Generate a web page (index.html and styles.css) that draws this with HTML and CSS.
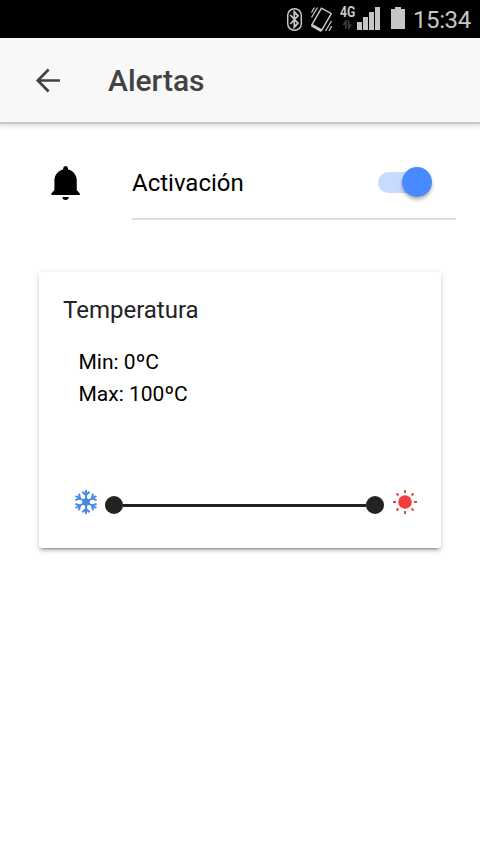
FILE: index.html
```html
<!DOCTYPE html>
<html lang="es">
<head>
<meta charset="utf-8">
<title>Alertas</title>
<link rel="stylesheet" href="styles.css">
</head>
<body>
<div class="status">
  <svg class="status-icons" width="130" height="38" viewBox="280 0 130 38" aria-hidden="true">
    <g fill="none" stroke="#c6c6c6">
      <rect x="287.7" y="8.7" width="13.6" height="21.6" rx="6.6" stroke-width="1.5"/>
      <path d="M290.300 15l7.700 8.200-3.700 4V11.800l3.700 4-7.700 8.200" stroke-width="1.800"/>
      <path d="M321.5 8.2l9.800 5.4-9.800 17-9.800-5.400z" stroke-width="1.500" stroke-linejoin="round"/>
      <path d="M311.8 25.2l9.500 5.400" stroke-width="3"/>
      <path d="M311.500 12.500l3-5M311.500 17.500l6-10M325.500 31l6-10M329 31l2.800-4.800" stroke-width="1.300"/>
    </g>
    <path d="M357 22h5v8h-5zM363 17h5v13h-5zM369 12h5v18h-5zM375 7h5v23h-5z" fill="#c6c6c6"/>
    <path d="M342.500 25l3-5h1.200v9h-1.800v-4zM352 24.500l-3 5h-1.200v-9h1.800v4z" fill="#3a3a3a"/>
    <path d="M391 9h4V7h6v2h4v20h-14z" fill="#c6c6c6"/>
  </svg>
  <span class="network">4G</span>
  <span class="clock">15:34</span>
</div>
<header class="toolbar">
  <svg class="back" width="26" height="26" viewBox="0 0 26 26" aria-hidden="true"><path d="M25 13.500H4M13.600 2.500L2.800 13.500l10.800 11" fill="none" stroke="#424242" stroke-width="2.700"/></svg>
  <h1 class="title">Alertas</h1>
</header>
<main class="content">
  <div class="item">
    <svg class="bell" width="30" height="36" viewBox="0 0 30 36" aria-hidden="true"><path transform="translate(.9 0) scale(.98 1)" d="M12.500 3.400a2.500 2.500 0 0 1 5 0v1.200c5.400 1.200 8.900 5.500 8.900 10.900v9.500l3.100 3.600v1.400H.5v-1.400L3.600 25v-9.500c0-5.400 3.500-9.700 8.900-10.900zM11.800 32h6.400a3.200 3 0 0 1-6.400 0z"/></svg>
    <div class="item-inner">
      <span class="label">Activación</span>
      <span class="toggle"><span class="knob"></span></span>
    </div>
  </div>
  <section class="card">
    <h2 class="card-title">Temperatura</h2>
    <p class="values">Min: 0ºC<br>Max: 100ºC</p>
    <div class="range">
      <svg class="snow" width="24" height="26" viewBox="-12 -13 24 26" aria-hidden="true">
        <defs><path id="arm" d="M0 0V-12M-3.600-10.200L0-6.800l3.600-3.400"/></defs>
        <circle r="3.800" fill="#4788e0"/>
        <g fill="none" stroke="#4788e0" stroke-width="2">
          <use href="#arm"/><use href="#arm" transform="rotate(60)"/><use href="#arm" transform="rotate(120)"/><use href="#arm" transform="rotate(180)"/><use href="#arm" transform="rotate(240)"/><use href="#arm" transform="rotate(300)"/>
        </g>
      </svg>
      <div class="slider"><span class="handle"></span><span class="bar"></span><span class="handle"></span></div>
      <svg class="sun" width="24" height="26" viewBox="-12 -13 24 26" aria-hidden="true">
        <circle r="6.800" fill="#f53d3d"/>
        <path d="M0-12v3M0 9v3M-12 0h3M9 0h3M-8.500-8.500l2 2M6.500 6.500l2 2M-8.500 8.500l2-2M6.500-6.500l2-2" stroke="#d24a44" stroke-width="1.900"/>
      </svg>
    </div>
  </section>
</main>
</body>
</html>
```
FILE: styles.css
```css
* { box-sizing: border-box; }
body {
  margin: 0;
  min-height: 854px;
  background: #fff;
  color: #000;
  font-family: Roboto, "Liberation Sans", sans-serif;
}
h1, h2, p { margin: 0; font-weight: 400; }
svg { display: block; flex: none; }
.status {
  position: relative;
  display: flex;
  align-items: center;
  height: 38px;
  padding-left: 280px;
  background: #000;
  color: #c6c6c6;
}
.network {
  position: absolute;
  left: 340px;
  top: 5px;
  font-size: 14px;
  line-height: 15px;
  font-weight: 700;
  transform: scaleX(.87);
  transform-origin: left;
}
.clock {
  margin-left: 3px;
  padding-top: 2px;
  font-size: 24px;
  line-height: 28px;
  letter-spacing: -0.4px;
}
.toolbar {
  display: flex;
  align-items: center;
  height: 84px;
  padding-left: 35px;
  background: #f8f8f8;
  box-shadow: 0 2px 1px #c9c9c9, 0 4px 3px #e4e4e4, 0 7px 3px #f8f8f8;
}
.title {
  margin-left: 47px;
  padding-top: 2px;
  color: #424242;
  font-size: 30px;
  line-height: 36px;
  font-weight: 500;
}
.content { padding-top: 24px; }
.item {
  display: flex;
  align-items: center;
  height: 74px;
  padding: 0 24px 0 50px;
}
.item-inner {
  display: flex;
  flex: 1;
  align-items: center;
  justify-content: space-between;
  height: 74px;
  margin-left: 52px;
  padding-right: 24px;
  border-bottom: 2px solid #dedede;
}
.label { padding-top: 2px; font-size: 24px; line-height: 28px; }
.toggle {
  display: flex;
  align-items: center;
  justify-content: flex-end;
  width: 54px;
  height: 21px;
  border-radius: 11px;
  background: linear-gradient(90deg, #c8dbfe 42px, transparent 42px);
}
.knob {
  width: 30px;
  height: 30px;
  flex: none;
  border-radius: 50%;
  background: #488aff;
  box-shadow: 0 3px 3px rgba(0, 0, 0, .2), 0 2px 5px rgba(0, 0, 0, .12);
}
.card {
  width: 402px;
  height: 276px;
  margin: 52px auto 0;
  padding: 20px 24px 0;
  border-radius: 3px;
  background: #fff;
  box-shadow: 0 3px 3px rgba(0, 0, 0, .14), 0 4.500px 1.500px -3px rgba(0, 0, 0, .2), 0 1.500px 7px rgba(0, 0, 0, .12);
}
.card-title { color: #222; font-size: 24px; line-height: 36px; }
.values { margin: 18px 0 0 15.500px; font-size: 21px; line-height: 32px; }
.range {
  display: flex;
  align-items: center;
  margin: 79px 0 0 11px;
}
.slider {
  display: flex;
  align-items: center;
  width: 279px;
  margin: 6px 9px 0 7px;
}
.handle {
  width: 18px;
  height: 18px;
  border-radius: 50%;
  background: #222;
}
.bar { flex: 1; height: 3px; background: #222; }
```
